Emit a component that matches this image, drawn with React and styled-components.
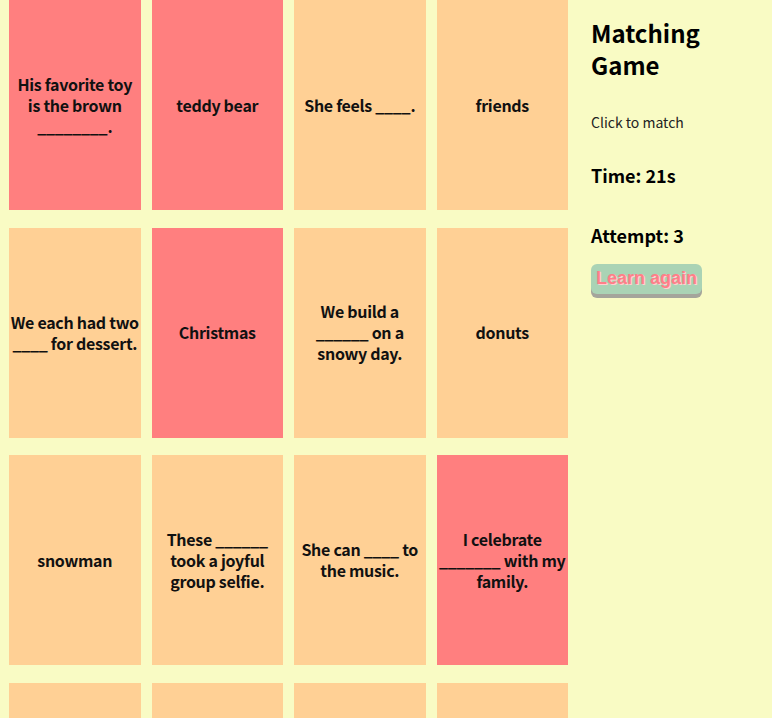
import styled, { createGlobalStyle } from "styled-components"

const GlobalStyle = createGlobalStyle`
    body {
        margin: 0;
        background-color: #f9fbc4;
        font-family: "Noto Sans CJK KR", "Noto Sans", sans-serif;
    }
`

const cards = [
    { text: "His favorite toy is the brown ________.", matched: true },
    { text: "teddy bear", matched: true },
    { text: "She feels ____.", matched: false },
    { text: "friends", matched: false },
    { text: "We each had two ____ for dessert.", matched: false },
    { text: "Christmas", matched: true },
    { text: "We build a ______ on a snowy day.", matched: false },
    { text: "donuts", matched: false },
    { text: "snowman", matched: false },
    { text: "These ______ took a joyful group selfie.", matched: false },
    { text: "She can ____ to the music.", matched: false },
    { text: "I celebrate _______ with my family.", matched: true },
    { text: "", matched: false },
    { text: "", matched: false },
    { text: "", matched: false },
    { text: "", matched: false },
]

export default function App() {
    return (
        <>
            <GlobalStyle />
            <Page>
                <Board>
                    {cards.map((card, i) => (
                        <Card key={i} $matched={card.matched}>
                            {card.text}
                        </Card>
                    ))}
                </Board>
                <Sidebar>
                    <Title>Matching Game</Title>
                    <Hint>Click to match</Hint>
                    <Stat>Time: 21s</Stat>
                    <Stat>Attempt: 3</Stat>
                    <LearnButton>Learn again</LearnButton>
                </Sidebar>
            </Page>
        </>
    )
}

const Page = styled.div`
    display: flex;
    align-items: flex-start;
    padding-left: 9px;
    gap: 23px;
`

const Board = styled.div`
    display: grid;
    grid-template-columns: repeat(4, 131.5px);
    grid-auto-rows: 210px;
    column-gap: 11px;
    row-gap: 17.5px;
`

const Card = styled.div`
    display: flex;
    align-items: center;
    justify-content: center;
    text-align: center;
    padding: 0 1px;
    background-color: ${props => props.$matched ? "#ff7f7f" : "#ffd095"};
    color: #111;
    font-size: 16px;
    font-weight: 700;
    line-height: 21px;
    letter-spacing: -0.3px;
    cursor: pointer;
`

const Sidebar = styled.div`
    width: 150px;
    display: flex;
    flex-direction: column;
    align-items: flex-start;
    color: #000;
`

const Title = styled.h1`
    margin: 17px 0 0;
    font-size: 24px;
    line-height: 32px;
    font-weight: 700;
`

const Hint = styled.p`
    margin: 31px 0 0;
    font-size: 14px;
    font-weight: 400;
    color: #222;
`

const Stat = styled.h3`
    margin: 31px 0 0;
    font-size: 18px;
    font-weight: 700;
    line-height: 24px;

    & + & {
        margin-top: 36px;
    }
`

const LearnButton = styled.button`
    margin-top: 17px;
    padding: 4px 5px 5px;
    border: none;
    border-radius: 6px;
    background-color: #aad3b5;
    box-shadow: 0 4px 0 #a4a59b;
    color: #ff7f88;
    font-family: "Liberation Sans", Arial, sans-serif;
    font-size: 18px;
    font-weight: 700;
    text-shadow: 1px 1px 0 #ffd0d0;
    cursor: pointer;
`
